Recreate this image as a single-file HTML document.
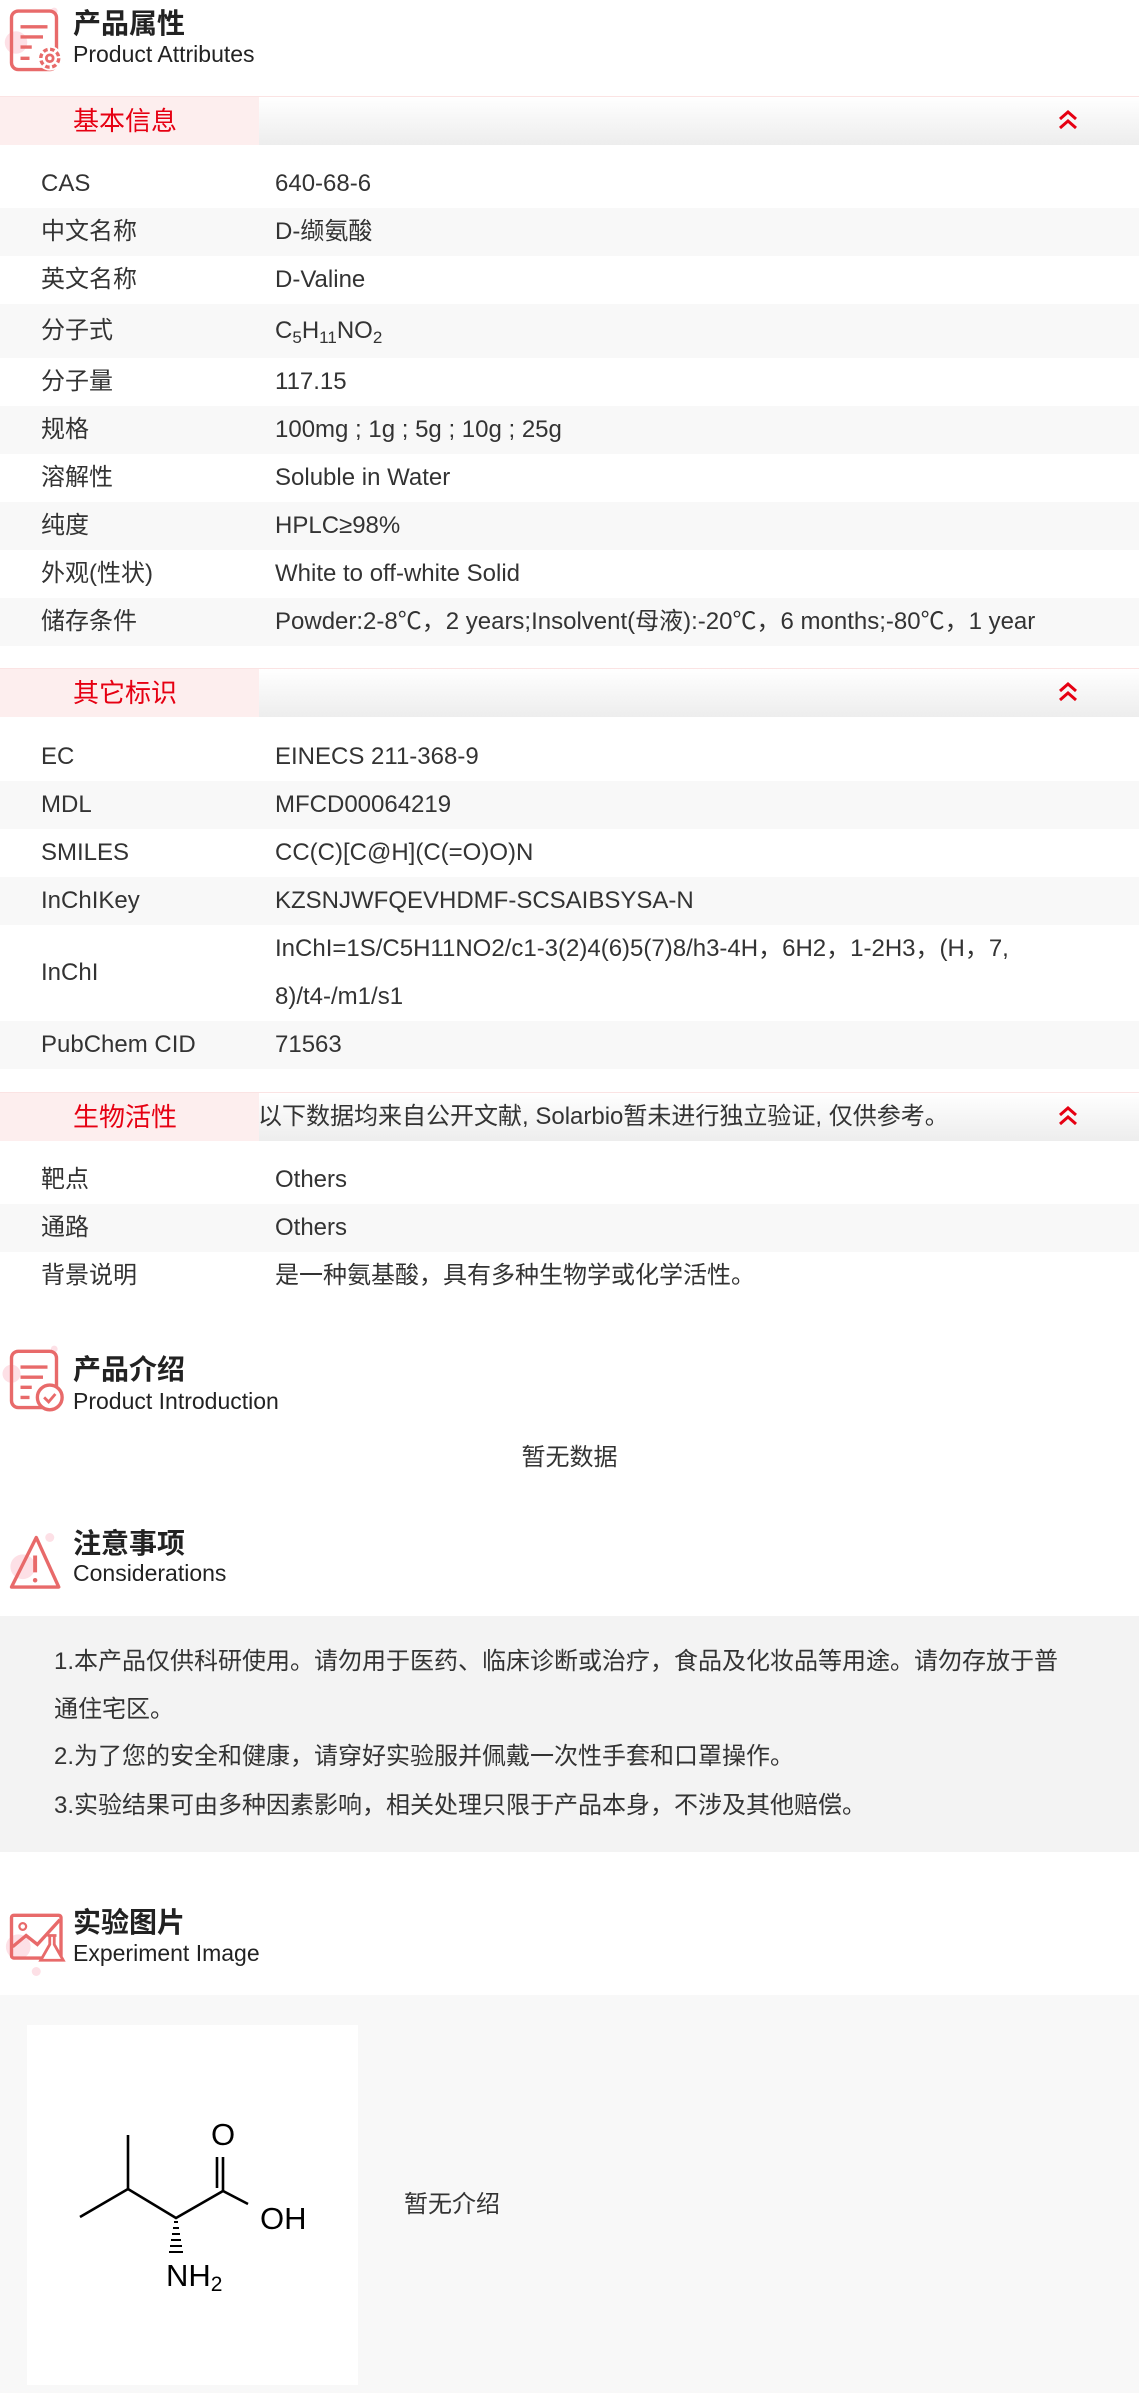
<!DOCTYPE html>
<html><head><meta charset="utf-8">
<style>
*{margin:0;padding:0;box-sizing:border-box}
body{width:1139px;height:2393px;background:#fff;font-family:"Liberation Sans","Noto Sans CJK SC",sans-serif;color:#333;position:relative;overflow:hidden;font-size:24px}
.a{position:absolute}
.t1{font-size:28px;font-weight:bold;color:#222;line-height:30px}
.t2{font-size:23px;color:#222;line-height:26px}
.bar{position:absolute;left:0;width:1139px;height:49px;border-top:1px solid #fbe3e3;background:linear-gradient(#fff,#ededed)}
.bar .l{position:absolute;left:0;top:0;width:259px;height:48px;background:#fdeeee;color:#e60012;font-size:26px;line-height:48px;padding-left:73px}
.bar .r{position:absolute;left:258px;top:0;line-height:48px;font-size:24px;color:#333}
.bar svg{position:absolute;left:1058px;top:13px}
.row{position:absolute;left:0;width:1139px;height:48px;line-height:48px}
.row.g{background:#f8f8f8}
.row .k{position:absolute;left:41px}
.row .v{position:absolute;left:275px}
sub{font-size:17px;vertical-align:-5px}
.note{position:absolute;left:0;top:1616px;width:1139px;height:236px;background:#f3f3f3}
.note p{position:absolute;left:54px;font-size:24px;line-height:30px;color:#333}
</style></head><body>

<svg class="a" style="left:2px;top:2px" width="64" height="72" viewBox="0 0 56 64">
<circle cx="12" cy="36" r="10" fill="#fde0e6"/><circle cx="46" cy="8" r="3" fill="#fde0e6"/>
<rect x="8" y="8" width="40" height="52" rx="6" fill="none" stroke="#e86a6a" stroke-width="3"/>
<path d="M16 22h24M16 31h20M16 40h10M16 50h8" stroke="#e86a6a" stroke-width="3"/>
<circle cx="42" cy="50" r="11" fill="#fff"/><circle cx="42" cy="50" r="8" fill="none" stroke="#e86a6a" stroke-width="3" stroke-dasharray="4 2.3"/><circle cx="42" cy="50" r="3" fill="none" stroke="#e86a6a" stroke-width="2.5"/>
</svg>
<div class="a t1" style="left:73px;top:9px">产品属性</div>
<div class="a t2" style="left:73px;top:41px">Product Attributes</div>

<div class="bar" style="top:96px"><div class="l">基本信息</div><svg width="20" height="20" viewBox="0 0 20 20"><path d="M2 9L10 2L18 9M2 18L10 11L18 18" fill="none" stroke="#e60012" stroke-width="3"/></svg></div>
<div class="row" style="top:160px"><span class="k">CAS</span><span class="v">640-68-6</span></div>
<div class="row g" style="top:208px"><span class="k">中文名称</span><span class="v">D-缬氨酸</span></div>
<div class="row" style="top:256px"><span class="k">英文名称</span><span class="v">D-Valine</span></div>
<div class="row g" style="top:304px;height:54px;line-height:54px"><span class="k">分子式</span><span class="v">C<sub>5</sub>H<sub>11</sub>NO<sub>2</sub></span></div>
<div class="row" style="top:358px"><span class="k">分子量</span><span class="v">117.15</span></div>
<div class="row g" style="top:406px"><span class="k">规格</span><span class="v">100mg ; 1g ; 5g ; 10g ; 25g</span></div>
<div class="row" style="top:454px"><span class="k">溶解性</span><span class="v">Soluble in Water</span></div>
<div class="row g" style="top:502px"><span class="k">纯度</span><span class="v">HPLC≥98%</span></div>
<div class="row" style="top:550px"><span class="k">外观(性状)</span><span class="v">White to off-white Solid</span></div>
<div class="row g" style="top:598px"><span class="k">储存条件</span><span class="v">Powder:2-8℃，2 years;Insolvent(母液):-20℃，6 months;-80℃，1 year</span></div>

<div class="bar" style="top:668px"><div class="l">其它标识</div><svg width="20" height="20" viewBox="0 0 20 20"><path d="M2 9L10 2L18 9M2 18L10 11L18 18" fill="none" stroke="#e60012" stroke-width="3"/></svg></div>
<div class="row" style="top:733px"><span class="k">EC</span><span class="v">EINECS 211-368-9</span></div>
<div class="row g" style="top:781px"><span class="k">MDL</span><span class="v">MFCD00064219</span></div>
<div class="row" style="top:829px"><span class="k">SMILES</span><span class="v">CC(C)[C@H](C(=O)O)N</span></div>
<div class="row g" style="top:877px"><span class="k">InChIKey</span><span class="v">KZSNJWFQEVHDMF-SCSAIBSYSA-N</span></div>
<div class="row" style="top:925px;height:96px;line-height:96px"><span class="k">InChI</span><span class="v" style="line-height:48px">InChI=1S/C5H11NO2/c1-3(2)4(6)5(7)8/h3-4H，6H2，1-2H3，(H，7,<br>8)/t4-/m1/s1</span></div>
<div class="row g" style="top:1021px"><span class="k">PubChem CID</span><span class="v">71563</span></div>

<div class="bar" style="top:1092px"><div class="l">生物活性</div><div class="r">以下数据均来自公开文献, Solarbio暂未进行独立验证, 仅供参考。</div><svg width="20" height="20" viewBox="0 0 20 20"><path d="M2 9L10 2L18 9M2 18L10 11L18 18" fill="none" stroke="#e60012" stroke-width="3"/></svg></div>
<div class="row" style="top:1156px"><span class="k">靶点</span><span class="v">Others</span></div>
<div class="row g" style="top:1204px"><span class="k">通路</span><span class="v">Others</span></div>
<div class="row" style="top:1252px"><span class="k">背景说明</span><span class="v">是一种氨基酸，具有多种生物学或化学活性。</span></div>

<svg class="a" style="left:2px;top:1340px" width="64" height="72" viewBox="0 0 56 64">
<circle cx="8" cy="30" r="8" fill="#fde0e6"/><circle cx="46" cy="8" r="3" fill="#fde0e6"/>
<rect x="8" y="10" width="40" height="50" rx="6" fill="none" stroke="#e86a6a" stroke-width="3"/>
<path d="M16 24h24M16 33h20M16 42h10M16 51h8" stroke="#e86a6a" stroke-width="3"/>
<circle cx="42" cy="51" r="11" fill="#fff" stroke="#e86a6a" stroke-width="3"/><path d="M37 51l4 4l6-7" fill="none" stroke="#e86a6a" stroke-width="2.5"/>
</svg>
<div class="a t1" style="left:73px;top:1355px">产品介绍</div>
<div class="a t2" style="left:73px;top:1388px">Product Introduction</div>
<div class="a" style="left:0;width:1139px;top:1444px;text-align:center;line-height:28px">暂无数据</div>

<svg class="a" style="left:2px;top:1524px" width="64" height="72" viewBox="0 0 56 64">
<circle cx="18" cy="38" r="11" fill="#fde0e6"/><circle cx="42" cy="12" r="4" fill="#fde0e6"/>
<path d="M30 12L50 56H8Z" fill="none" stroke="#e86a6a" stroke-width="3" stroke-linejoin="round"/>
<path d="M29 28v15" stroke="#e86a6a" stroke-width="3.5"/><circle cx="29" cy="50" r="2" fill="#e86a6a"/>
</svg>
<div class="a t1" style="left:73px;top:1529px">注意事项</div>
<div class="a t2" style="left:73px;top:1560px">Considerations</div>
<div class="note">
<p style="top:31px">1.本产品仅供科研使用。请勿用于医药、临床诊断或治疗，食品及化妆品等用途。请勿存放于普</p>
<p style="top:79px">通住宅区。</p>
<p style="top:126px">2.为了您的安全和健康，请穿好实验服并佩戴一次性手套和口罩操作。</p>
<p style="top:175px">3.实验结果可由多种因素影响，相关处理只限于产品本身，不涉及其他赔偿。</p>
</div>

<svg class="a" style="left:2px;top:1904px" width="64" height="72" viewBox="0 0 56 64">
<circle cx="14" cy="38" r="11" fill="#fde0e6"/><circle cx="30" cy="60" r="4" fill="#fde0e6"/>
<rect x="8" y="10" width="44" height="38" rx="2" fill="none" stroke="#e86a6a" stroke-width="3"/>
<circle cx="18" cy="20" r="3" fill="none" stroke="#e86a6a" stroke-width="2"/>
<path d="M9 38l12-10l10 8l20-22" fill="none" stroke="#e86a6a" stroke-width="3"/>
<path d="M42 28v8l-8 14h20l-8-14v-8M40 28h8" fill="#fff" stroke="#e86a6a" stroke-width="2.5"/>
</svg>
<div class="a t1" style="left:73px;top:1908px">实验图片</div>
<div class="a t2" style="left:73px;top:1940px">Experiment Image</div>

<div class="a" style="left:0;top:1995px;width:1139px;height:398px;background:#f8f8f8"></div>
<div class="a" style="left:27px;top:2025px;width:331px;height:360px;background:#fff"></div>
<svg class="a" style="left:27px;top:2025px" width="331" height="360" viewBox="0 0 331 360">
<g stroke="#000" stroke-width="2.6" fill="none">
<path d="M53 192L101 164L149 193L196 166L221 179"/>
<path d="M101 164V110"/>
<path d="M196 166V132M190 163V132"/>
</g>
<g stroke="#000" stroke-width="2">
<path d="M147 197h4M146 203h6M145 209h8M144 215h10M143 221h12M142 227h14"/>
</g>
<text x="196" y="120" font-family="Liberation Sans" font-size="31" text-anchor="middle" fill="#000">O</text>
<text x="233" y="204" font-family="Liberation Sans" font-size="31" fill="#000">OH</text>
<text x="139" y="261" font-family="Liberation Sans" font-size="31" fill="#000">NH<tspan font-size="21" dy="5">2</tspan></text>
</svg>
<div class="a" style="left:404px;top:2191px;line-height:28px">暂无介绍</div>
</body></html>
